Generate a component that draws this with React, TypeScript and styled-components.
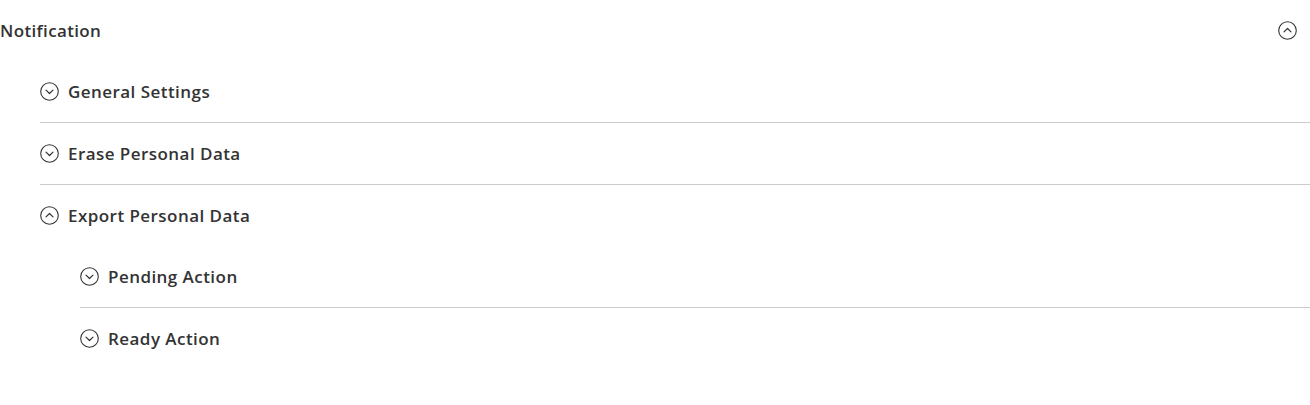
import React from "react";
import styled, { createGlobalStyle } from "styled-components";

const Global = createGlobalStyle`
  html, body { margin: 0; padding: 0; background: #fff; }
  body { font-family: "Open Sans", "Noto Sans", sans-serif; color: #303030; }
`;

const Page = styled.div`
  width: 1310px;
`;

const Header = styled.div`
  display: flex;
  align-items: center;
  justify-content: space-between;
  height: 61px;
  padding-right: 13px;
`;

const HeaderTitle = styled.span`
  font-size: 17px;
  font-weight: 600;
  letter-spacing: 0.35px;
  color: #333333;
`;

const List = styled.div<{ $indent: number }>`
  margin-left: ${(p) => p.$indent}px;
  display: flex;
  flex-direction: column;
`;

const Item = styled.div<{ $last?: boolean }>`
  border-bottom: ${(p) => (p.$last ? "none" : "1px solid #cccccc")};
`;

const Title = styled.div`
  display: flex;
  align-items: center;
  gap: 9px;
  height: 61px;
`;

const TitleText = styled.span`
  font-size: 17px;
  font-weight: 600;
  letter-spacing: 0.45px;
  color: #333333;
`;

const Toggle: React.FC<{ open?: boolean }> = ({ open }) => (
  <svg width="19" height="19" viewBox="0 0 19 19" fill="none">
    <circle cx="9.5" cy="9.5" r="8.8" stroke="#333333" strokeWidth="1.1" />
    {open ? (
      <path d="M6 10.9 L9.5 7.5 L13 10.9" stroke="#333333" strokeWidth="1.2" strokeLinecap="round" strokeLinejoin="round" />
    ) : (
      <path d="M6 8.1 L9.5 11.5 L13 8.1" stroke="#333333" strokeWidth="1.2" strokeLinecap="round" strokeLinejoin="round" />
    )}
  </svg>
);

type Node = { title: string; open?: boolean; children?: Node[] };

const tree: Node[] = [
  { title: "General Settings" },
  { title: "Erase Personal Data" },
  {
    title: "Export Personal Data",
    open: true,
    children: [{ title: "Pending Action" }, { title: "Ready Action" }],
  },
];

const Section: React.FC<{ nodes: Node[] }> = ({ nodes }) => (
  <List $indent={40}>
    {nodes.map((n, i) => (
      <Item key={n.title} $last={i === nodes.length - 1}>
        <Title>
          <Toggle open={n.open} />
          <TitleText>{n.title}</TitleText>
        </Title>
        {n.open && n.children && <Section nodes={n.children} />}
      </Item>
    ))}
  </List>
);

export default function App() {
  return (
    <Page>
      <Global />
      <Header>
        <HeaderTitle>Notification</HeaderTitle>
        <Toggle open />
      </Header>
      <Section nodes={tree} />
    </Page>
  );
}
